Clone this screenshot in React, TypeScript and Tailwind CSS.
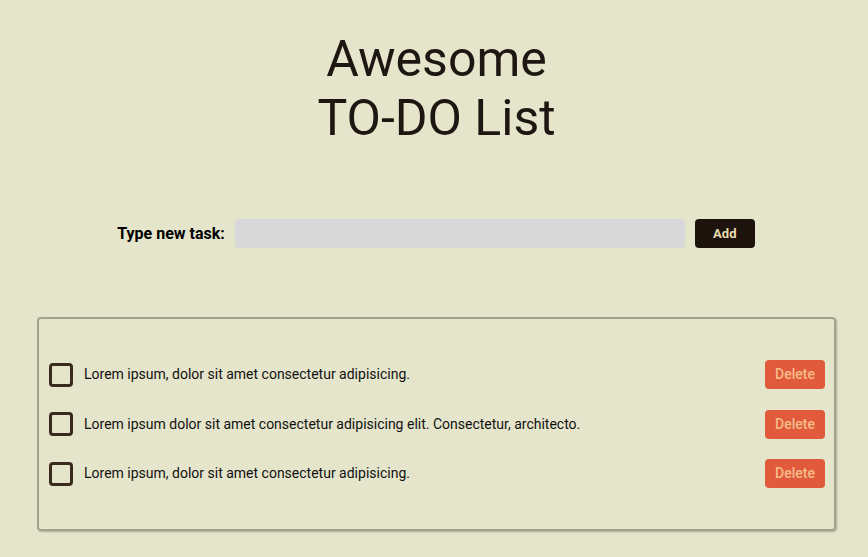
import React from 'react'

const tasks = [
  'Lorem ipsum, dolor sit amet consectetur adipisicing.',
  'Lorem ipsum dolor sit amet consectetur adipisicing elit. Consectetur, architecto.',
  'Lorem ipsum, dolor sit amet consectetur adipisicing.',
]

export default function App() {
  return (
    <div className="min-h-[557px] w-full bg-[#e5e5cb] font-['Roboto',sans-serif] text-[#1e1610] overflow-hidden">
      <h1 className="pt-[30px] pl-[5px] text-center text-[50px] leading-[59px] font-normal">
        Awesome
        <br />
        TO-DO List
      </h1>

      <div className="mt-[71px] flex items-center justify-center gap-[10px] pl-[4px]">
        <label className="text-[16px] font-bold text-black">Type new task:</label>
        <input className="h-[29px] w-[450px] rounded-[4px] bg-[#d8d8d8] px-2 text-sm outline-none" />
        <button className="h-[29px] w-[60px] rounded-[4px] bg-[#1c130d] text-[13px] font-bold text-[#e8dcae]">
          Add
        </button>
      </div>

      <div className="mt-[69px] ml-[37px] w-[799px] rounded-[4px] border-2 border-[#a3a38d] pt-[31px] pb-[31px] pl-[10px] pr-[9px] shadow-[1px_1px_2px_rgba(0,0,0,0.25)]">
        {tasks.map((t, i) => (
          <div key={i} className="flex items-center py-[10px] [&+&]:mt-[0.5px]">
            <span className="h-[24px] w-[24px] shrink-0 rounded-[4px] border-[3px] border-[#3b2b1e]" />
            <span className="ml-[11px] flex-1 text-[14px] text-[#111]">{t}</span>
            <button className="h-[29px] w-[60px] rounded-[4px] bg-[#e05a3b] text-[14px] font-medium text-[#f6bd8b]">
              Delete
            </button>
          </div>
        ))}
      </div>
    </div>
  )
}
